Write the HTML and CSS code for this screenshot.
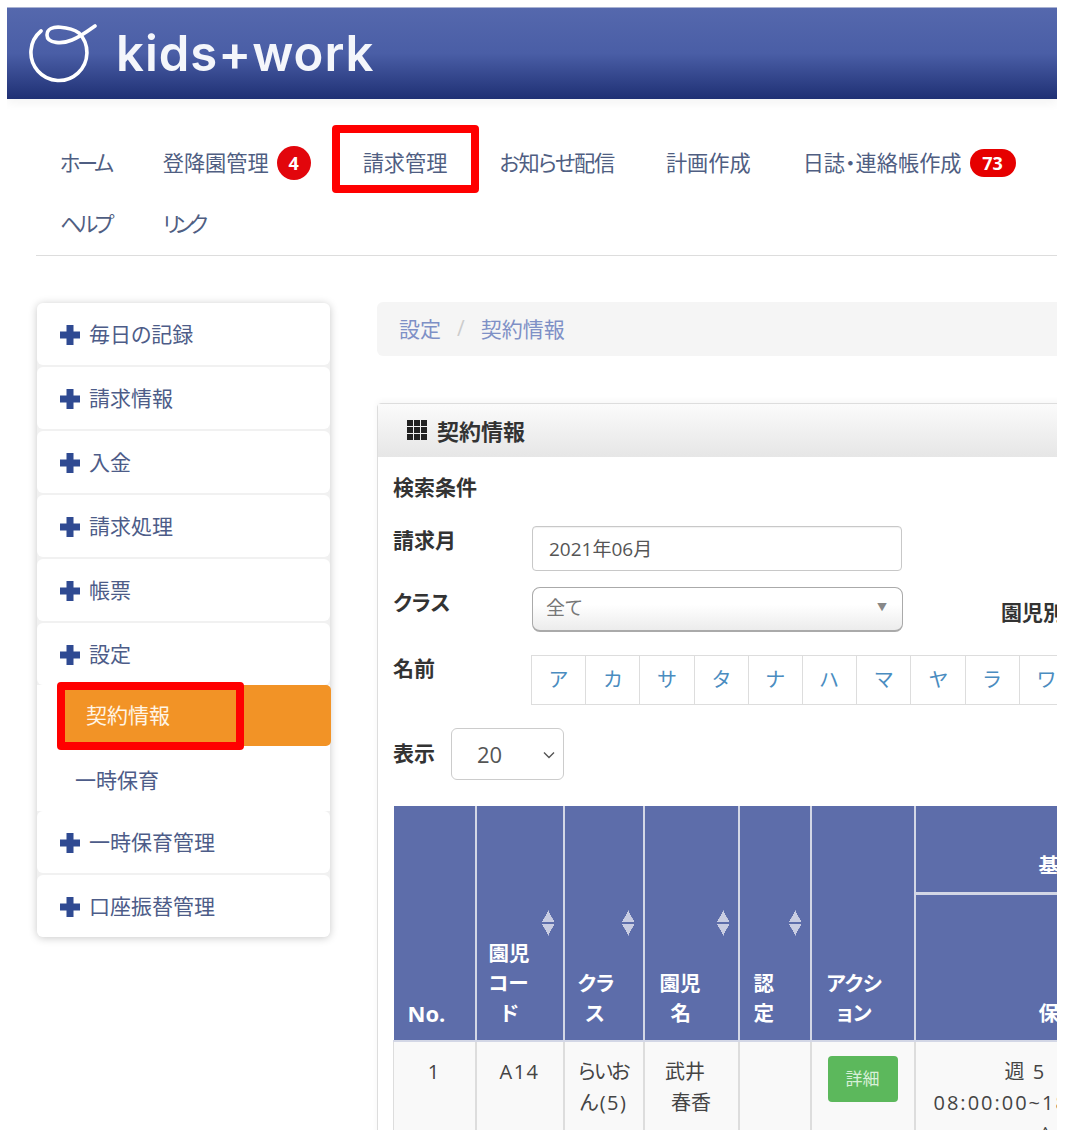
FILE: index.html
```html
<!DOCTYPE html>
<html lang="ja">
<head>
<meta charset="utf-8">
<title>kids+work</title>
<link rel="stylesheet" href="styles.css">
</head>
<body>
<div class="frame">
  <header class="topbar">
    <svg class="logo-mark" viewBox="28 24 70 60" width="70" height="60" aria-hidden="true"><path d="M41 31A28 28 0 1 0 79 33C72 28 47 22 47 35C47 44 63 44 72 40C80 37 88 31 95 26"/></svg>
    <span class="logo-text">kids+work</span>
  </header>

  <nav class="gnav">
    <a class="gnav-item tight-a">ホーム</a>
    <a class="gnav-item">登降園管理<span class="badge badge-round">4</span></a>
    <a class="gnav-item">請求管理<span class="redbox redbox-nav"></span></a>
    <a class="gnav-item tight-c">お知らせ配信</a>
    <a class="gnav-item">計画作成</a>
    <a class="gnav-item">日誌・連絡帳作成<span class="badge badge-pill">73</span></a>
    <a class="gnav-item tight-b">ヘルプ</a>
    <a class="gnav-item tight-d">リンク</a>
  </nav>

  <div class="layout">
    <aside class="sidebar">
      <a class="side-card"><svg class="plus" viewBox="0 0 20 20"><path d="M6.500 0h7v6.500H20v7h-6.500V20h-7v-6.500H0v-7h6.500z"/></svg>毎日の記録</a>
      <a class="side-card"><svg class="plus" viewBox="0 0 20 20"><path d="M6.500 0h7v6.500H20v7h-6.500V20h-7v-6.500H0v-7h6.500z"/></svg>請求情報</a>
      <a class="side-card"><svg class="plus" viewBox="0 0 20 20"><path d="M6.500 0h7v6.500H20v7h-6.500V20h-7v-6.500H0v-7h6.500z"/></svg>入金</a>
      <a class="side-card"><svg class="plus" viewBox="0 0 20 20"><path d="M6.500 0h7v6.500H20v7h-6.500V20h-7v-6.500H0v-7h6.500z"/></svg>請求処理</a>
      <a class="side-card"><svg class="plus" viewBox="0 0 20 20"><path d="M6.500 0h7v6.500H20v7h-6.500V20h-7v-6.500H0v-7h6.500z"/></svg>帳票</a>
      <a class="side-card"><svg class="plus" viewBox="0 0 20 20"><path d="M6.500 0h7v6.500H20v7h-6.500V20h-7v-6.500H0v-7h6.500z"/></svg>設定</a>
      <div class="side-sub">
        <a class="side-active">契約情報<span class="redbox redbox-side"></span></a>
        <a class="side-link">一時保育</a>
      </div>
      <a class="side-card"><svg class="plus" viewBox="0 0 20 20"><path d="M6.500 0h7v6.500H20v7h-6.500V20h-7v-6.500H0v-7h6.500z"/></svg>一時保育管理</a>
      <a class="side-card side-last"><svg class="plus" viewBox="0 0 20 20"><path d="M6.500 0h7v6.500H20v7h-6.500V20h-7v-6.500H0v-7h6.500z"/></svg>口座振替管理</a>
    </aside>

    <main class="content">
      <div class="crumbs"><a>設定</a><span class="crumb-sep">/</span><a>契約情報</a></div>

      <section class="panel">
        <h2 class="panel-head">
          <svg class="grid-icon" viewBox="0 0 20 20"><path d="M0 0h6v6H0zM7 0h6v6H7zM14 0h6v6h-6zM0 7h6v6H0zM7 7h6v6H7zM14 7h6v6h-6zM0 14h6v6H0zM7 14h6v6H7zM14 14h6v6h-6z"/></svg>
          契約情報
        </h2>
        <div class="panel-body">
          <div class="label">検索条件</div>

          <div class="form-row form-month">
            <div class="label label-col">請求月</div>
            <div class="text-input">2021年06月</div>
          </div>

          <div class="form-row form-class">
            <div class="label label-col">クラス</div>
            <div class="class-select">全て<span class="class-arrow">▼</span></div>
            <div class="label label-extra">園児別</div>
          </div>

          <div class="form-row form-name">
            <div class="label label-col">名前</div>
            <ul class="kana">
              <li>ア</li><li>カ</li><li>サ</li><li>タ</li><li>ナ</li><li>ハ</li><li>マ</li><li>ヤ</li><li>ラ</li><li>ワ</li>
            </ul>
          </div>

          <div class="form-row form-size">
            <div class="label">表示</div>
            <div class="size-select">20<svg class="chev" viewBox="0 0 12 8"><path d="M1 1.500l5 5 5-5"/></svg></div>
          </div>

          <table class="grid">
            <colgroup>
              <col class="c-no"><col class="c-code"><col class="c-class"><col class="c-name"><col class="c-cert"><col class="c-act"><col class="c-time">
            </colgroup>
            <thead>
              <tr class="head-top">
                <th rowspan="2" class="th-no">No.</th>
                <th rowspan="2" class="th-code">園児<br>コー<br><span class="indent-code">ド</span><span class="sort"></span></th>
                <th rowspan="2" class="th-class">クラ<br><span class="indent-class">ス</span><span class="sort"></span></th>
                <th rowspan="2" class="th-name">園児<br><span class="indent-name">名</span><span class="sort"></span></th>
                <th rowspan="2" class="th-cert">認<br>定<span class="sort"></span></th>
                <th rowspan="2" class="th-act">アクシ<br><span class="indent-act">ョン</span></th>
                <th class="th-wide">基本情報</th>
              </tr>
              <tr class="head-bottom">
                <th class="th-wide">保育時間</th>
              </tr>
            </thead>
            <tbody>
              <tr>
                <td class="latin td-first">1</td>
                <td class="latin">A14</td>
                <td><span class="tight-e">らいお</span><br><span class="latin">ん(5)</span></td>
                <td><span class="name-first">武井</span><br>春香</td>
                <td></td>
                <td><a class="btn-detail">詳細</a></td>
                <td class="time-cell"><div class="schedule"><span class="week">週 5</span><br><span class="latin">08:00:00~18:00:00</span><br><span class="caret">^</span></div></td>
              </tr>
            </tbody>
          </table>
        </div>
      </section>
    </main>
  </div>
</div>
</body>
</html>
```

FILE: styles.css
```css
* { box-sizing: border-box; }
html, body { margin: 0; padding: 0; background: #fff; }
body {
  font-family: "Open Sans", "Noto Sans CJK JP", sans-serif;
  font-feature-settings: "palt";
  color: #333;
}
.frame {
  width: 1050px;
  height: 1123px;
  margin: 7px 0 0 7px;
  overflow: hidden;
  position: relative;
  background: #fff;
}
.topbar {
  height: 92px;
  display: flex;
  align-items: center;
  padding-left: 21px;
  gap: 18px;
  background: linear-gradient(#5568ad 0%, #4a5ea6 50%, #1f3074 100%);
  box-shadow: 0 4px 10px rgba(0,0,0,.05);
  border-top: 1px solid #a9b2d2;
}
.logo-mark { flex: none; }
.logo-mark path { fill: none; stroke: #fff; stroke-width: 3.6; stroke-linecap: round; }
.logo-text {
  font-family: "Inter", sans-serif;
  font-feature-settings: normal;
  font-size: 49px;
  font-weight: 600;
  line-height: 60px;
  letter-spacing: 1px;
  color: #f4f6fb;
}

.gnav {
  margin-left: 29px;
  width: 1021px;
  padding: 48px 0 15px 24px;
  display: flex;
  flex-wrap: wrap;
  column-gap: 52px;
  row-gap: 29px;
  border-bottom: 1px solid #ddd;
}
.gnav-item {
  position: relative;
  display: flex;
  align-items: center;
  height: 32px;
  font-size: 21.2px;
  line-height: 32px;
  color: #4f5e82;
}
.tight-a { letter-spacing: -3.300px; }
.tight-b { letter-spacing: -3.300px; }
.tight-c { letter-spacing: -1.300px; }
.tight-d { letter-spacing: -5px; }
.tight-e { letter-spacing: -1.700px; }
.badge {
  display: inline-block;
  margin-left: 8px;
  background: #e60000;
  color: #fff;
  font-weight: 700;
  font-size: 18px;
  text-align: center;
  font-family: "Open Sans", sans-serif;
}
.badge-round { width: 34px; height: 34px; line-height: 34px; border-radius: 50%; background: #e2060c; }
.badge-pill { width: 46px; height: 28px; line-height: 28px; border-radius: 14px; }
.redbox {
  position: absolute;
  border: 8px solid #f00;
  border-radius: 4px;
  pointer-events: none;
}
.redbox-nav { left: -31px; top: -22px; width: 147px; height: 68px; }
.redbox-side { left: -3px; top: -3px; width: 187px; height: 68px; }

.layout {
  display: flex;
  align-items: flex-start;
  margin-top: 47px;
  margin-left: 30px;
  gap: 47px;
}
.sidebar {
  flex: none;
  width: 293px;
  display: flex;
  flex-direction: column;
  background: #f1f1f1;
  border-radius: 6px;
  box-shadow: 0 1px 8px rgba(0,0,0,.22);
}
.side-card {
  display: flex;
  align-items: center;
  height: 62px;
  margin-bottom: 2px;
  padding: 0 0 2px 23px;
  background: #fff;
  border-radius: 6px;
  font-size: 21px;
  color: #4d5c88;
}
.side-last { margin-bottom: 0; }
.plus { width: 20px; height: 20px; margin: 4px 9px 0 0; fill: #2f4a92; flex: none; }
.side-sub {
  background: #fff;
  margin-top: -2px;
  height: 126px;
  margin-bottom: 0;
}
.side-active {
  position: relative;
  display: block;
  height: 61px;
  margin-left: 23px;
  margin-right: -1px;
  padding-left: 26px;
  line-height: 61px;
  font-size: 21px;
  color: #fff5e6;
  background: #f29326;
  border-radius: 5px;
}
.side-link {
  display: block;
  height: 65px;
  padding-left: 38px;
  line-height: 69px;
  font-size: 21px;
  color: #4d5c88;
}

.content { flex: none; width: 900px; }
.crumbs {
  height: 54px;
  margin-top: -1px;
  padding: 0 0 2px 22px;
  display: flex;
  align-items: center;
  background: #f5f5f5;
  border-radius: 6px;
  font-size: 21px;
  color: #7e90c6;
}
.crumb-sep { margin: 0 16px; color: #ccc; }
.panel {
  margin-top: 47px;
  border: 1px solid #ddd;
  border-radius: 4px 0 0 0;
  box-shadow: 0 -2px 6px rgba(0,0,0,.04);
}
.panel-head {
  display: flex;
  align-items: center;
  gap: 10px;
  height: 53px;
  margin: 0;
  padding: 0 0 2px 29px;
  font-size: 22px;
  font-weight: 700;
  color: #333;
  background: linear-gradient(#fbfbfb, #e6e6e6);
}
.grid-icon { width: 20px; height: 20px; fill: #222; flex: none; }
.panel-body { padding: 15px 15px 0; }
.label { font-size: 21px; font-weight: 700; height: 32px; line-height: 30px; color: #333; white-space: nowrap; }
.form-row { display: flex; }
.label-col { width: 139px; flex: none; }
.form-month { margin-top: 22px; }
.form-month .label-col { margin-top: -1px; }
.text-input {
  width: 370px;
  height: 45px;
  padding-left: 16px;
  line-height: 45px;
  font-size: 19px;
  color: #555;
  border: 1px solid #c8c8c8;
  border-radius: 4px;
  box-shadow: inset 0 1px 1px rgba(0,0,0,.06);
}
.form-class { margin-top: 16px; }
.class-select {
  position: relative;
  width: 371px;
  height: 45px;
  padding-left: 13px;
  line-height: 41px;
  font-size: 19px;
  color: #777;
  border: 1px solid #aaa;
  border-bottom-width: 2px;
  border-radius: 8px;
  background: linear-gradient(#fff 40%, #ececec);
}
.class-arrow { position: absolute; right: 15px; top: -1px; font-size: 10px; color: #888; }
.label-extra { margin-left: 98px; margin-top: 10px; }
.form-name { margin-top: 21px; }
.kana {
  display: flex;
  list-style: none;
  margin: 2px 0 0 -1px;
  padding: 0;
  border-top: 1px solid #ddd;
  border-bottom: 1px solid #ddd;
  border-left: 1px solid #ddd;
  width: 600px;
  height: 50px;
}
.kana li {
  width: 54.200px;
  flex: none;
  text-align: center;
  line-height: 48px;
  font-size: 20px;
  color: #4a8cc0;
  border-right: 1px solid #ddd;
}
.form-size { margin-top: 23px; align-items: center; gap: 16px; }
.size-select {
  position: relative;
  width: 113px;
  height: 52px;
  padding-left: 25px;
  line-height: 50px;
  font-size: 22px;
  color: #555;
  border: 1px solid #ccc;
  border-radius: 6px;
}
.chev { position: absolute; right: 8px; top: 22px; width: 12px; height: 8px; fill: none; stroke: #555; stroke-width: 1.400; }

.grid {
  margin: 26px 0 0;
  width: 851px;
  table-layout: fixed;
  border-collapse: collapse;
}
.c-no { width: 82px; }
.c-code { width: 88px; }
.c-class { width: 80px; }
.c-name { width: 95px; }
.c-cert { width: 72px; }
.c-act { width: 104px; }
.c-time { width: 330px; }
.grid th {
  position: relative;
  background: #5d6daa;
  color: #fff;
  font-size: 20.500px;
  font-weight: 700;
  line-height: 30px;
  vertical-align: bottom;
  text-align: left;
  padding: 0 0 12px;
  border: 2px solid #d3d7e6;
  border-top: 0;
}
.grid th.th-wide { text-align: center; }
.grid th.th-no { padding-left: 14px; font-size: 22px; border-left: 0; }
.grid th.th-code { padding-left: 12px; }
.grid th.th-class { padding-left: 13px; }
.grid th.th-name { padding-left: 15px; }
.grid th.th-cert { padding-left: 14px; }
.grid th.th-act { padding-left: 15px; }
.indent-code { padding-left: 12px; }
.indent-class { padding-left: 8px; }
.indent-name { padding-left: 11px; }
.indent-act { padding-left: 10px; }
.head-top .th-wide { height: 87px; padding-bottom: 12px; border-bottom-width: 3px; }
.head-bottom .th-wide { height: 148px; }
.sort {
  position: absolute;
  right: 8px;
  bottom: 104px;
  width: 13px;
  height: 26px;
  background:
    linear-gradient(to bottom right, transparent 50%, #c9cde2 51%) left top / 6.5px 12px no-repeat,
    linear-gradient(to bottom left, transparent 50%, #c9cde2 51%) right top / 6.5px 12px no-repeat,
    linear-gradient(to top right, transparent 50%, #c9cde2 51%) left bottom / 6.5px 12px no-repeat,
    linear-gradient(to top left, transparent 50%, #c9cde2 51%) right bottom / 6.5px 12px no-repeat;
}
.grid td {
  background: #f9f9f9;
  height: 120px;
  padding: 14px 0 0;
  vertical-align: top;
  text-align: center;
  font-size: 20px;
  line-height: 31px;
  color: #444;
  border: 2px solid #ddd;
  border-top: 0;
}
.grid td.td-first { border-left-width: 1px; }
.grid td.latin, .latin { letter-spacing: 1.500px; }
.name-first { position: relative; left: -6px; }
.btn-detail {
  display: block;
  width: 70px;
  height: 46px;
  margin: 0 0 0 16px;
  line-height: 46px;
  font-size: 17px;
  color: #d8f0d8;
  background: #5cb85c;
  border-radius: 4px;
}
.grid td.time-cell { text-align: left; padding-left: 18px; }
.time-cell .latin { letter-spacing: 2px; }
.schedule { display: inline-block; text-align: center; white-space: nowrap; }
.week { word-spacing: 3px; position: relative; left: -11px; }
.caret { display: inline-block; margin-left: 20px; }
```
